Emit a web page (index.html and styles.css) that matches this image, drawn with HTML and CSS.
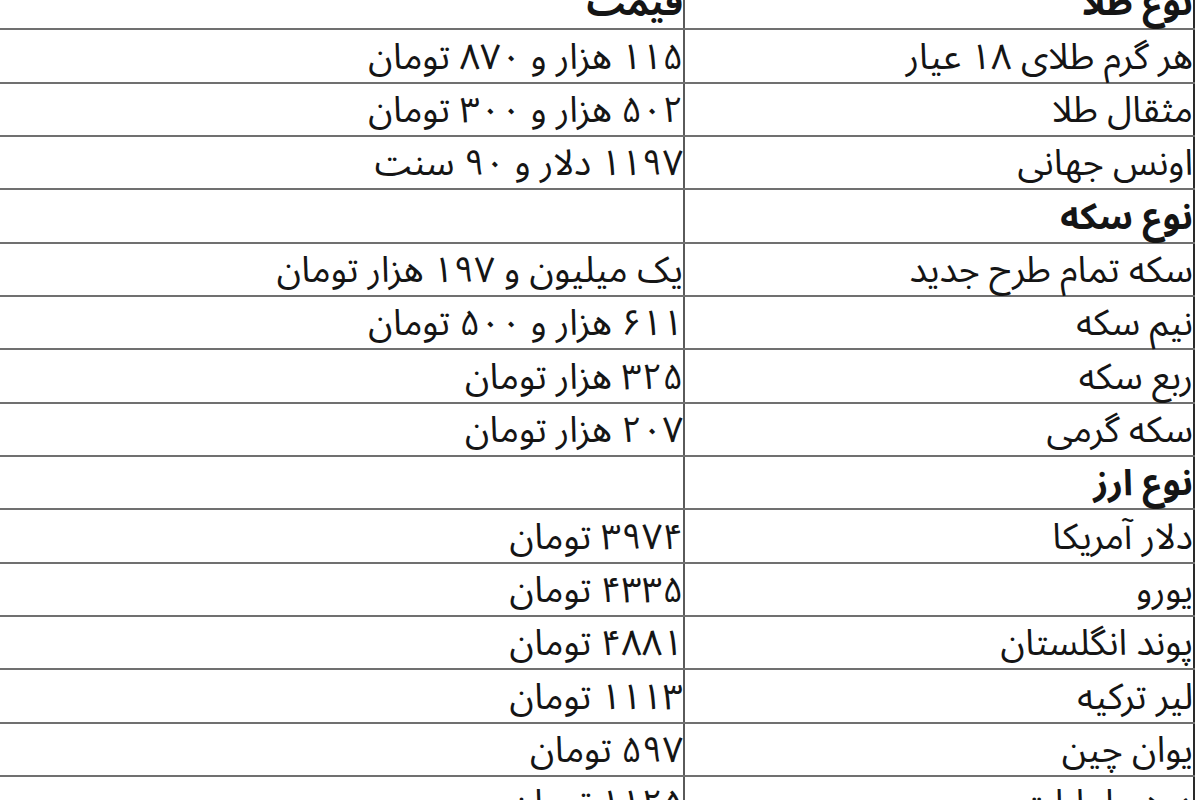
FILE: index.html
```html
<!DOCTYPE html>
<html lang="fa" dir="rtl">
<head>
<meta charset="utf-8">
<title>قیمت طلا، سکه و ارز</title>
<link rel="stylesheet" href="styles.css">
</head>
<body>
<table class="prices">
  <tr class="head"><td class="name">نوع طلا</td><td class="price">قیمت</td></tr>
  <tr><td class="name">هر گرم طلای ۱۸ عیار</td><td class="price">۱۱۵ هزار و ۸۷۰ تومان</td></tr>
  <tr><td class="name">مثقال طلا</td><td class="price">۵۰۲ هزار و ۳۰۰ تومان</td></tr>
  <tr><td class="name">اونس جهانی</td><td class="price">۱۱۹۷ دلار و ۹۰ سنت</td></tr>
  <tr class="head"><td class="name">نوع سکه</td><td class="price"></td></tr>
  <tr><td class="name">سکه تمام طرح جدید</td><td class="price">یک میلیون و ۱۹۷ هزار تومان</td></tr>
  <tr><td class="name">نیم سکه</td><td class="price">۶۱۱ هزار و ۵۰۰ تومان</td></tr>
  <tr><td class="name">ربع سکه</td><td class="price">۳۲۵ هزار تومان</td></tr>
  <tr><td class="name">سکه گرمی</td><td class="price">۲۰۷ هزار تومان</td></tr>
  <tr class="head"><td class="name">نوع ارز</td><td class="price"></td></tr>
  <tr><td class="name">دلار آمریکا</td><td class="price">۳۹۷۴ تومان</td></tr>
  <tr><td class="name">یورو</td><td class="price">۴۳۳۵ تومان</td></tr>
  <tr><td class="name">پوند انگلستان</td><td class="price">۴۸۸۱ تومان</td></tr>
  <tr><td class="name">لیر ترکیه</td><td class="price">۱۱۱۳ تومان</td></tr>
  <tr><td class="name">یوان چین</td><td class="price">۵۹۷ تومان</td></tr>
  <tr><td class="name">درهم امارات</td><td class="price">۱۱۲۵ تومان</td></tr>
</table>
</body>
</html>
```
FILE: styles.css
```css
html, body {
  margin: 0;
  padding: 0;
  background: #ffffff;
  overflow: hidden;
}
body {
  direction: rtl;
  font-family: "Noto Sans Arabic", "DejaVu Sans", sans-serif;
  color: #151515;
}
.prices {
  border-collapse: collapse;
  margin-top: -25px;
  margin-right: 5px;
  margin-left: -20px;
  width: 1215px;
  border-right: 2px solid #2a2a2a;
  table-layout: fixed;
}
.prices tr {
  height: 53.33px;
}
.prices td {
  border-top: 2px solid #707070;
  border-bottom: 2px solid #707070;
  padding: 0 0 1px 0;
  font-size: 36px;
  line-height: 46px;
  vertical-align: bottom;
  text-align: right;
  white-space: nowrap;
}
.prices td.name {
  width: 508px;
  border-left: 2px solid #5a5a5a;
}
.prices tr.head td.name {
  font-weight: bold;
}
.prices tr.head:first-child td {
  font-weight: bold;
}
```
